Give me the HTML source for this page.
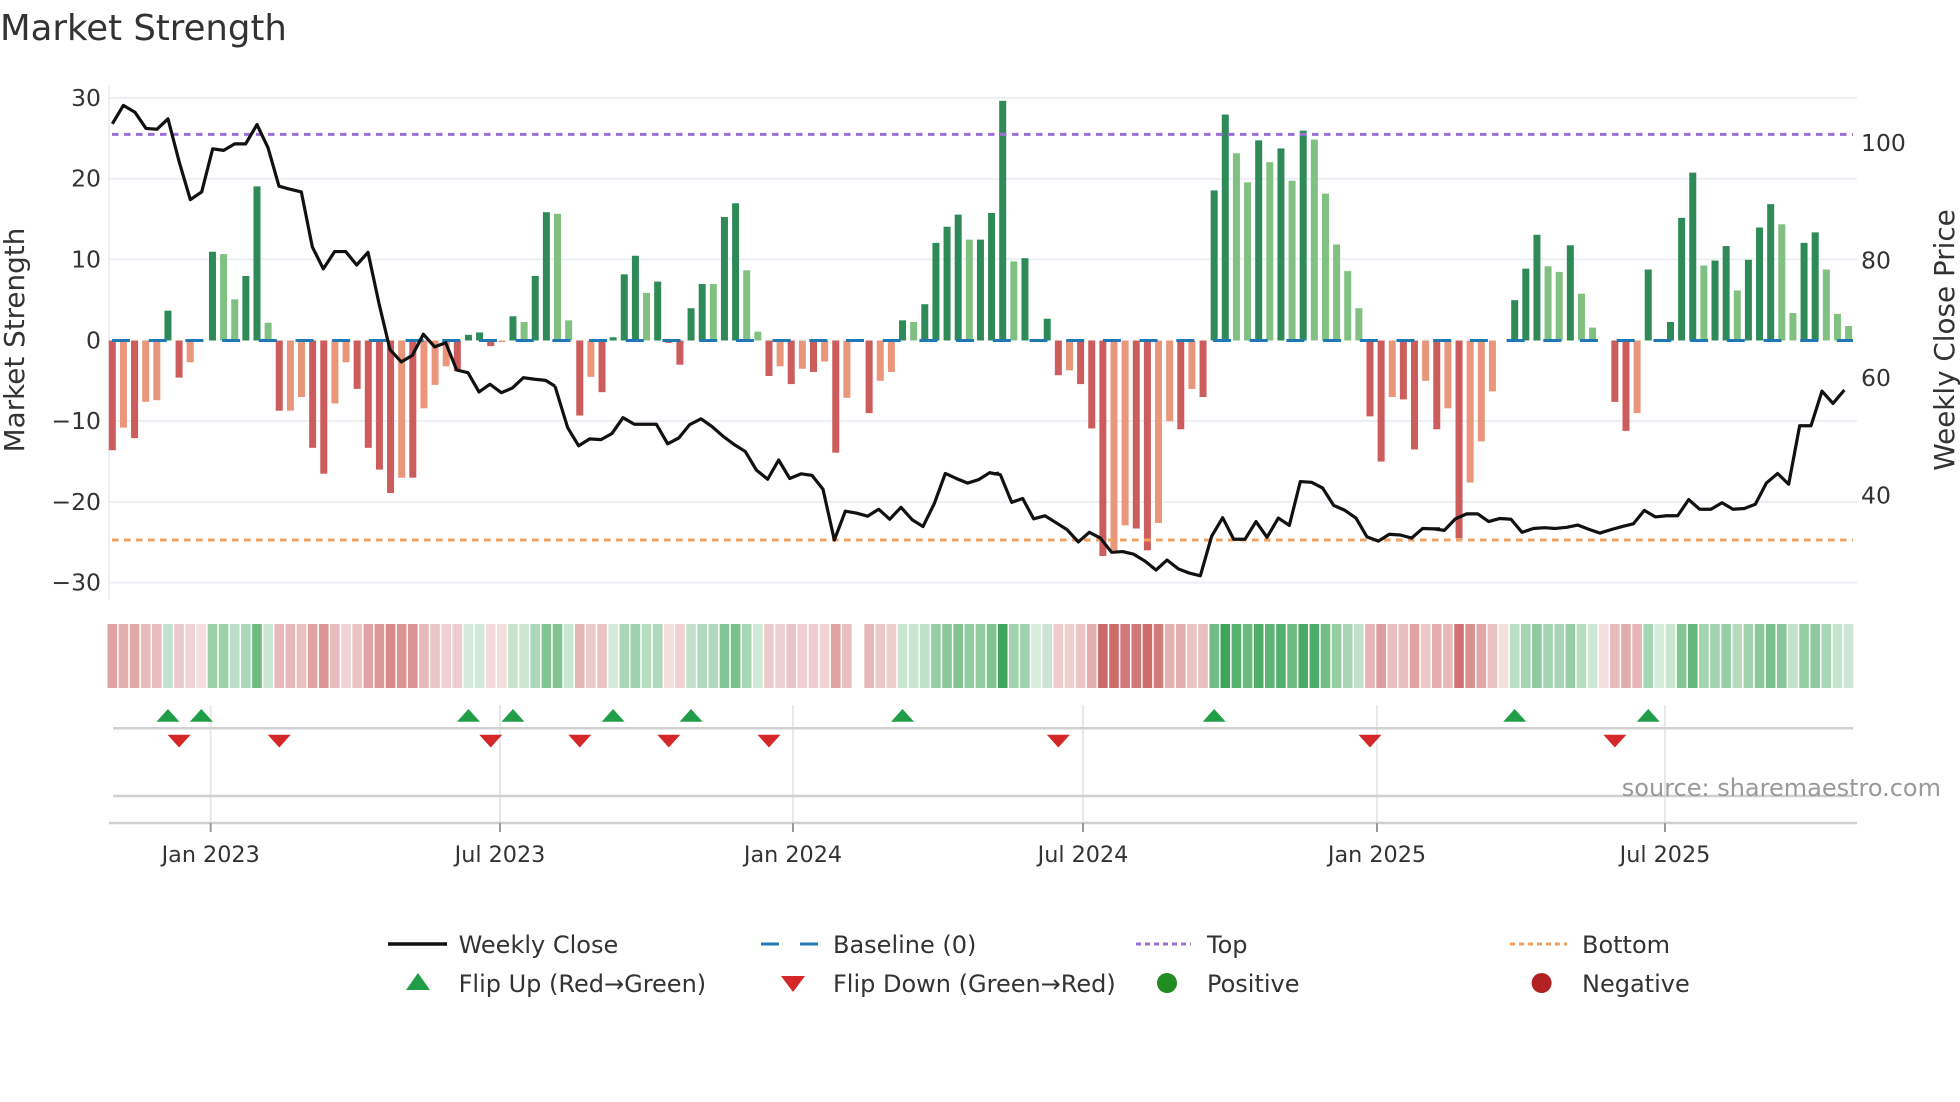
<!DOCTYPE html>
<html><head><meta charset="utf-8"><style>
html,body{margin:0;padding:0;background:#fff;}
svg{display:block;font-family:"DejaVu Sans","Liberation Sans",sans-serif;}
</style></head><body>
<svg id="s" width="1960" height="1102" viewBox="0 0 1960 1102" xmlns="http://www.w3.org/2000/svg">
<rect width="1960" height="1102" fill="#fff"/>
<text x="0" y="40" font-size="35.5" fill="#333">Market Strength</text>
<g stroke="#eceff4" stroke-width="2">
<line x1="109" x2="1857" y1="98" y2="98"/><line x1="109" x2="1857" y1="178.7" y2="178.7"/>
<line x1="109" x2="1857" y1="259.4" y2="259.4"/><line x1="109" x2="1857" y1="421" y2="421"/>
<line x1="109" x2="1857" y1="502" y2="502"/><line x1="109" x2="1857" y1="582.6" y2="582.6"/>
<line x1="109" x2="109" y1="85" y2="600"/>
</g>
<g font-size="23.5" fill="#333" text-anchor="end">
<text x="101" y="106">30</text><text x="101" y="186.7">20</text><text x="101" y="267.4">10</text>
<text x="101" y="348.5">0</text><text x="101" y="429">−10</text><text x="101" y="510">−20</text><text x="101" y="590.6">−30</text>
</g>
<g font-size="23.5" fill="#333">
<text x="1861" y="151">100</text><text x="1861" y="268.6">80</text><text x="1861" y="386">60</text><text x="1861" y="503.5">40</text>
</g>
<text transform="translate(24,340) rotate(-90)" font-size="27.8" fill="#333" text-anchor="middle">Market Strength</text>
<text transform="translate(1954,340) rotate(-90)" font-size="27.8" fill="#333" text-anchor="middle">Weekly Close Price</text>
<g id="bars"></g>
<line x1="112" x2="1853" y1="340.5" y2="340.5" stroke="#1f77b4" stroke-width="3" stroke-dasharray="18 18.7"/>
<line x1="112" x2="1853" y1="134.4" y2="134.4" stroke="#9b6fd6" stroke-width="3" stroke-dasharray="6.5 5.5"/>
<line x1="112" x2="1853" y1="540" y2="540" stroke="#f0a060" stroke-width="3" stroke-dasharray="6.5 5.5"/>
<g fill="none" stroke="#111" stroke-width="3.2" stroke-linejoin="round">
<g transform="translate(105,90) scale(0.33333,0.38462)"><polyline vector-effect="non-scaling-stroke" points="22,88 55,40 90,58 123,100 156,102 189,75 222,185 256,285 290,265 323,153 356,157 389,140 422,140 456,90 489,150 522,250 555,258 589,265 622,408 655,465 689,420 722,420 755,455 789,422 822,555 855,675 889,707 922,690 955,635 989,668 1022,657 1055,728 1089,735 1122,785 1155,765 1189,787 1222,775 1255,748 1289,752 1322,755 1350,770"/></g>
<g transform="translate(545,90) scale(0.33333,0.38462)"><polyline vector-effect="non-scaling-stroke" points="30,770 68,878 101,925 134,907 168,909 201,893 234,852 268,869 301,869 334,869 368,920 401,905 434,870 468,855 501,875 534,900 568,922 601,940 634,988 668,1012 701,962 734,1010 768,998 801,1002 834,1038 868,1170 901,1095 934,1100 968,1108 1001,1090 1034,1116 1068,1085 1101,1117 1134,1135 1168,1075 1201,997 1234,1010 1268,1022 1301,1013 1334,995 1349,998 1362,996"/></g>
<g transform="translate(985,90) scale(0.33333,0.38462)"><polyline vector-effect="non-scaling-stroke" points="13,995 46,1000 80,1072 113,1062 146,1115 180,1107 213,1125 246,1143 280,1175 313,1150 346,1165 380,1202 413,1200 446,1207 480,1225 513,1248 546,1222 580,1245 613,1256 646,1263 680,1160 713,1112 746,1168 780,1168 813,1122 846,1163 880,1113 913,1132 946,1018 980,1020 1013,1035 1046,1080 1080,1093 1113,1113 1146,1162 1180,1173 1213,1155 1246,1157 1280,1165 1313,1140 1346,1141 1365,1141"/></g>
<g transform="translate(1425,90) scale(0.33333,0.38462)"><polyline vector-effect="non-scaling-stroke" points="25,1141 58,1145 91,1115 125,1102 158,1102 191,1122 225,1114 258,1116 291,1150 325,1140 358,1138 391,1140 425,1137 458,1131 491,1142 525,1152 558,1143 591,1135 625,1128 658,1093 691,1110 724,1107 758,1107 791,1065 824,1090 858,1090 891,1073 924,1090 958,1088 991,1077 1024,1022 1058,997 1091,1025 1124,873 1158,873 1191,783 1224,815 1258,780"/></g>
</g>
<g id="heat"></g>
<g stroke="#e6e8ec" stroke-width="2">
<line x1="210.7" x2="210.7" y1="705" y2="822"/><line x1="500" x2="500" y1="705" y2="822"/>
<line x1="793" x2="793" y1="705" y2="822"/><line x1="1083" x2="1083" y1="705" y2="822"/>
<line x1="1377" x2="1377" y1="705" y2="822"/><line x1="1665" x2="1665" y1="705" y2="822"/>
</g>
<g stroke="#d0d0d0" stroke-width="2.5">
<line x1="113" x2="1853" y1="728.3" y2="728.3"/>
<line x1="113" x2="1853" y1="796" y2="796"/>
<line x1="109" x2="1857" y1="823" y2="823"/>
</g>
<g stroke="#999" stroke-width="2">
<line x1="210.7" x2="210.7" y1="823" y2="832"/><line x1="500" x2="500" y1="823" y2="832"/>
<line x1="793" x2="793" y1="823" y2="832"/><line x1="1083" x2="1083" y1="823" y2="832"/>
<line x1="1377" x2="1377" y1="823" y2="832"/><line x1="1665" x2="1665" y1="823" y2="832"/>
</g>
<g id="marks"></g>
<g font-size="22.3" fill="#333" text-anchor="middle">
<text x="210.7" y="862">Jan 2023</text><text x="500" y="862">Jul 2023</text>
<text x="793" y="862">Jan 2024</text><text x="1083" y="862">Jul 2024</text>
<text x="1377" y="862">Jan 2025</text><text x="1665" y="862">Jul 2025</text>
</g>
<text x="1941" y="796" font-size="24" fill="#999" text-anchor="end">source: sharemaestro.com</text>
<line x1="388" x2="447" y1="944" y2="944" stroke="#111" stroke-width="3.5"/>
<line x1="761" x2="818" y1="944" y2="944" stroke="#1f77b4" stroke-width="3" stroke-dasharray="18 21"/>
<line x1="1136" x2="1191" y1="944" y2="944" stroke="#9b6fd6" stroke-width="3" stroke-dasharray="5 4"/>
<line x1="1510" x2="1567" y1="944" y2="944" stroke="#f0a060" stroke-width="3" stroke-dasharray="5 4"/>
<polygon points="406,990 430,990 418,973" fill="#1f9d47"/>
<polygon points="781,976 805,976 793,992" fill="#d62728"/>
<circle cx="1167" cy="983" r="10" fill="#228b22"/>
<circle cx="1541.6" cy="983" r="10" fill="#b22222"/>
<g font-size="24" fill="#333">
<text x="458.6" y="953">Weekly Close</text><text x="833" y="953">Baseline (0)</text>
<text x="1207" y="953">Top</text><text x="1582" y="953">Bottom</text>
<text x="458.6" y="992">Flip Up (Red→Green)</text><text x="833" y="992">Flip Down (Green→Red)</text>
<text x="1207" y="992">Positive</text><text x="1582" y="992">Negative</text>
</g>
</svg>
<script>
(function(){
var D="-13.6d,-10.8l,-12.1d,-7.6l,-7.4l,3.7d,-4.6d,-2.7l,0z,11d,10.7l,5.1l,8d,19.1d,2.2l,-8.7d,-8.7l,-7l,-13.3d,-16.5d,-7.8l,-2.7l,-6d,-13.3d,-16d,-18.9d,-17l,-17d,-8.4l,-5.5l,-3.2l,-3.8d,0.7d,1d,-0.7d,-0.2l,3d,2.3l,8d,15.9d,15.7l,2.5l,-9.3d,-4.5l,-6.4d,0.4d,8.2d,10.5d,5.9l,7.3d,-0.3d,-3d,4d,7d,7l,15.3d,17d,8.7l,1.1l,-4.4d,-3.2l,-5.4d,-3.5l,-3.9d,-2.6l,-13.9d,-7.1l,Nn,-9d,-5l,-3.9l,2.5d,2.3l,4.5d,12.1d,14.1d,15.6d,12.5l,12.5d,15.8d,29.7d,9.8l,10.2d,0.1l,2.7d,-4.3d,-3.7l,-5.4d,-10.9d,-26.7d,-26l,-22.9l,-23.3d,-26d,-22.6l,-10l,-11d,-6l,-7d,18.6d,28d,23.2l,19.6l,24.8d,22.1l,23.8d,19.8l,26d,24.9l,18.2l,11.9l,8.6l,4l,-9.4d,-15d,-7l,-7.3d,-13.5d,-5l,-11d,-8.4l,-24.5d,-17.6l,-12.5l,-6.3l,0z,5d,8.9d,13.1d,9.2l,8.5l,11.8d,5.8l,1.6l,0z,-7.6d,-11.2d,-9l,8.8d,0.2l,2.3d,15.2d,20.8d,9.3l,9.9d,11.7d,6.2l,10d,14d,16.9d,14.4l,3.4l,12.1d,13.4d,8.8l,3.3l,1.8l".split(",");
var NS="http://www.w3.org/2000/svg",bars=document.getElementById("bars"),heat=document.getElementById("heat"),marks=document.getElementById("marks");
function el(p,t,a){var e=document.createElementNS(NS,t);for(var k in a)e.setAttribute(k,a[k]);p.appendChild(e);return e;}
function mix(c,t){return "rgb("+c.map(function(v){return Math.round(255-(255-v)*t)}).join(",")+")";}
for(var i=0;i<D.length;i++){
 var s=D[i];if(s=="Nn")continue;
 var k=s.slice(-1),v=parseFloat(s.slice(0,-1));
 var x=112.3+11.13*i;
 if(v!==0){
  var h=Math.abs(v)*8.07,y=v>0?340.5-h:340.5;
  var col=v>0?(k=="d"?"#2e8b57":"#80c080"):(k=="d"?"#cd5c5c":"#e9967a");
  el(bars,"rect",{x:x-3.5,y:y,width:7,height:h,fill:col});
 }
 var t=0.2+0.75*Math.min(Math.abs(v),28)/28;
 var c=v>0?mix([52,160,80],t):mix([200,90,90],t);
 el(heat,"rect",{x:x-4.8,y:624,width:9.6,height:64,fill:c});
}
[5,8,32,36,45,52,71,99,126,138].forEach(function(i){var x=112.3+11.13*i;el(marks,"polygon",{points:(x-11.5)+",721.7 "+(x+11.5)+",721.7 "+x+",709",fill:"#1f9d47"});});
[6,15,34,42,50,59,85,113,135].forEach(function(i){var x=112.3+11.13*i;el(marks,"polygon",{points:(x-11.5)+",734.7 "+(x+11.5)+",734.7 "+x+",747.5",fill:"#d62728"});});
})();
</script>
</body></html>
